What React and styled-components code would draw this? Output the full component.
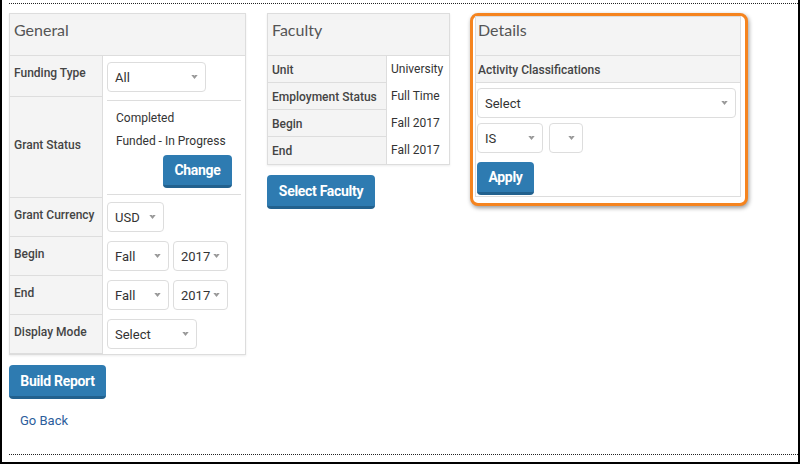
import styled, { createGlobalStyle } from 'styled-components';

const GlobalStyle = createGlobalStyle`
  html, body {
    margin: 0;
    padding: 0;
    background: #fff;
  }
  body {
    font-family: Roboto, "Liberation Sans", Arial, sans-serif;
    color: #333;
  }
`;

function Arrow() {
  return (
    <svg width="7" height="4" viewBox="0 0 8 5">
      <path d="M0 0 L3.4 0 L4 1.2 L4.6 0 L8 0 L4 5 Z" fill="#999" />
    </svg>
  );
}

function Dropdown({ value = '', width }) {
  return (
    <SelectBox style={{ width }}>
      <span>{value}</span>
      <Arrow />
    </SelectBox>
  );
}

const generalRows = [
  { label: 'Grant Currency', selects: [{ value: 'USD', width: 57 }] },
  { label: 'Begin', selects: [{ value: 'Fall', width: 62 }, { value: '2017', width: 55 }] },
  { label: 'End', selects: [{ value: 'Fall', width: 62 }, { value: '2017', width: 55 }] },
  { label: 'Display Mode', selects: [{ value: 'Select', width: 90 }] },
];

const facultyRows = [
  ['Unit', 'University'],
  ['Employment Status', 'Full Time'],
  ['Begin', 'Fall 2017'],
  ['End', 'Fall 2017'],
];

export default function App() {
  return (
    <>
      <GlobalStyle />
      <Frame>
        <TopRule />
        <Content>
          <Column>
            <Panel $width={237}>
              <PanelHeader>General</PanelHeader>
              <Row>
                <Label>Funding Type</Label>
                <Value $top={6} $bottom={5}>
                  <Dropdown value="All" width={99} />
                </Value>
              </Row>
              <Row>
                <Label $center>Grant Status</Label>
                <StatusCell>
                  <InnerRule />
                  <StatusText $first>Completed</StatusText>
                  <StatusText>Funded - In Progress</StatusText>
                  <ButtonLine>
                    <Button $width={69} $height={33}>Change</Button>
                  </ButtonLine>
                  <InnerRule />
                </StatusCell>
              </Row>
              {generalRows.map((row) => (
                <Row key={row.label}>
                  <Label>{row.label}</Label>
                  <Value $top={4} $bottom={5}>
                    {row.selects.map((s, i) => (
                      <Dropdown key={i} value={s.value} width={s.width} />
                    ))}
                  </Value>
                </Row>
              ))}
            </Panel>
            <Button $width={97} $top={10}>Build Report</Button>
            <BackLink href="#">Go Back</BackLink>
          </Column>

          <Column $left={21}>
            <Panel $width={183}>
              <PanelHeader>Faculty</PanelHeader>
              <FacultyGrid>
                <FacultyLabels>
                  {facultyRows.map(([l]) => (
                    <FacultyLabel key={l}>{l}</FacultyLabel>
                  ))}
                </FacultyLabels>
                <FacultyValues>
                  {facultyRows.map(([l, v]) => (
                    <FacultyValue key={l}>{v}</FacultyValue>
                  ))}
                </FacultyValues>
              </FacultyGrid>
            </Panel>
            <Button $width={108} $top={10}>Select Faculty</Button>
          </Column>

          <Highlight>
            <Panel $width={266} $flat>
              <PanelHeader $height={39} $top={3} $left={2}>Details</PanelHeader>
              <SubHeader>Activity Classifications</SubHeader>
              <DetailsBody>
                <Dropdown value="Select" width={259} />
                <SelectRow>
                  <Dropdown value="IS" width={66} />
                  <Dropdown value="" width={34} />
                </SelectRow>
                <Button $width={57} $height={33} $top={4}>Apply</Button>
              </DetailsBody>
            </Panel>
          </Highlight>
        </Content>
        <BottomRule />
      </Frame>
    </>
  );
}

const Frame = styled.div`
  width: 800px;
  height: 464px;
  box-sizing: border-box;
  border-left: 2px solid #000;
  border-right: 2px solid #000;
  border-bottom: 2px solid #000;
  padding-left: 7px;
  display: flex;
  flex-direction: column;
`;

const TopRule = styled.div`
  margin-top: 3px;
  border-top: 1px dotted #222;
`;

const BottomRule = styled.div`
  margin-bottom: 7px;
  border-top: 1px dotted #222;
`;

const Content = styled.div`
  flex: 1;
  display: flex;
  align-items: flex-start;
  padding-top: 9px;
`;

const Column = styled.div`
  display: flex;
  flex-direction: column;
  align-items: flex-start;
  margin-left: ${(p) => p.$left || 0}px;
`;

const Panel = styled.div`
  width: ${(p) => p.$width}px;
  box-sizing: border-box;
  border: 1px solid #ddd;
  background: #fff;
  box-shadow: ${(p) => (p.$flat ? 'none' : '0 1px 2px rgba(0, 0, 0, 0.08)')};
`;

const PanelHeader = styled.div`
  height: ${(p) => p.$height || 42}px;
  box-sizing: border-box;
  padding: ${(p) => p.$top ?? 6}px 0 0 ${(p) => p.$left ?? 4}px;
  background: #f4f4f4;
  border-bottom: 1px solid #ddd;
  font-family: Lato, "Open Sans", sans-serif;
  font-size: 16px;
  color: #555;
`;

const Row = styled.div`
  display: grid;
  grid-template-columns: 93px 1fr;
`;

const Label = styled.div`
  background: #f4f4f4;
  border-right: 1px solid #ddd;
  border-bottom: 1px solid #ddd;
  padding: ${(p) => (p.$center ? '0 0 4px 4px' : '10px 0 0 4px')};
  display: flex;
  align-items: ${(p) => (p.$center ? 'center' : 'flex-start')};
  font-size: 12px;
  line-height: 14px;
  font-weight: 500;
  color: #444;
`;

const Value = styled.div`
  display: flex;
  gap: 4px;
  padding: ${(p) => p.$top}px 4px ${(p) => p.$bottom}px;
`;

const StatusCell = styled.div`
  display: flex;
  flex-direction: column;
  padding: 3px 4px 3px;
`;

const InnerRule = styled.div`
  border-top: 1px solid #ddd;
`;

const StatusText = styled.div`
  padding-left: 9px;
  margin-top: ${(p) => (p.$first ? 6 : 0)}px;
  font-size: 12px;
  line-height: 23px;
  color: #333;
`;

const ButtonLine = styled.div`
  display: flex;
  justify-content: flex-end;
  padding: 2px 9px 6px 0;
`;

const SelectBox = styled.div`
  height: 30px;
  box-sizing: border-box;
  border: 1px solid #ddd;
  border-radius: 4px;
  background: #fff;
  display: flex;
  align-items: center;
  justify-content: space-between;
  padding: 0 7px 0 7px;
  font-size: 13px;
  color: #333;
`;

const Button = styled.button`
  width: ${(p) => p.$width}px;
  height: ${(p) => p.$height || 34}px;
  margin-top: ${(p) => p.$top || 0}px;
  box-sizing: border-box;
  border: none;
  border-bottom: 3px solid #22618e;
  border-radius: 4px;
  background: #2e7bb1;
  color: #fff;
  font-family: Roboto, "Liberation Sans", sans-serif;
  font-weight: 700;
  font-size: 14px;
  letter-spacing: -0.3px;
  padding: 0;
  cursor: pointer;
`;

const BackLink = styled.a`
  margin: 14px 0 0 11px;
  font-size: 13px;
  color: #2c5d9c;
  text-decoration: none;
`;

const FacultyGrid = styled.div`
  display: grid;
  grid-template-columns: 119px 1fr;
`;

const FacultyLabels = styled.div`
  background: #f4f4f4;
  border-right: 1px solid #ddd;
`;

const FacultyLabel = styled.div`
  height: 27px;
  box-sizing: border-box;
  border-bottom: 1px solid #ddd;
  padding: 7px 0 0 4px;
  font-size: 12px;
  line-height: 14px;
  font-weight: 500;
  color: #444;
  &:last-child {
    border-bottom: none;
  }
`;

const FacultyValues = styled.div`
  display: flex;
  flex-direction: column;
`;

const FacultyValue = styled.div`
  height: 27px;
  box-sizing: border-box;
  padding: 6px 0 0 4px;
  font-size: 12px;
  line-height: 14px;
  color: #333;
  white-space: nowrap;
`;

const Highlight = styled.div`
  margin-left: 20px;
  border: 3px solid #f5841f;
  border-radius: 8px;
  padding: 0 4px 6px 2px;
  box-shadow: 1px 2px 4px rgba(0, 0, 0, 0.4);
  background: #fff;
`;

const SubHeader = styled.div`
  height: 27px;
  box-sizing: border-box;
  padding: 7px 0 0 2px;
  background: #f4f4f4;
  border-bottom: 1px solid #ddd;
  font-size: 12px;
  line-height: 14px;
  font-weight: 500;
  color: #444;
`;

const DetailsBody = styled.div`
  display: flex;
  flex-direction: column;
  align-items: flex-start;
  gap: 5px;
  padding: 5px 5px 1px 1px;
`;

const SelectRow = styled.div`
  display: flex;
  gap: 6px;
`;
